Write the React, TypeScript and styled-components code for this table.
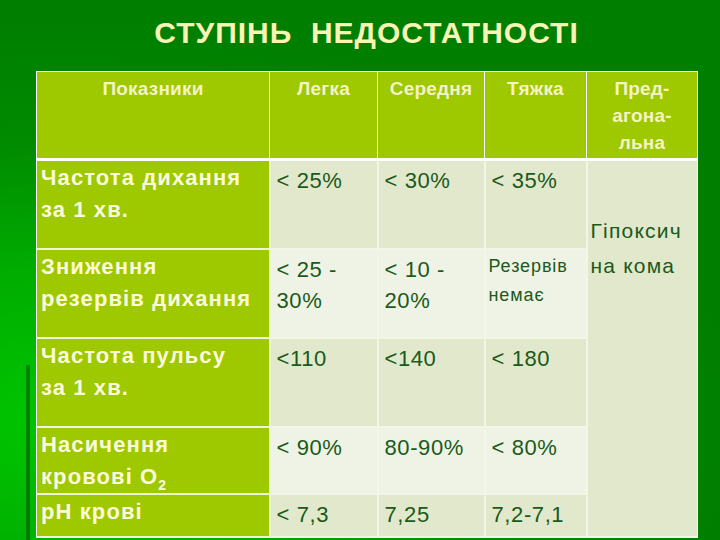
import styled, { createGlobalStyle } from 'styled-components'

const GlobalStyle = createGlobalStyle`
  html, body {
    margin: 0;
    padding: 0;
  }
  body {
    width: 720px;
    height: 540px;
    overflow: hidden;
    font-family: "Liberation Sans", Arial, sans-serif;
    background:
      linear-gradient(#008400, #007a00) 26px 365px / 4px 175px no-repeat,
      radial-gradient(ellipse 95% 75% at 8% 78%, #00c600 0%, #00ac00 38%, #008c00 68%, #007e00 100%);
  }
`

const Slide = styled.div`
  width: 720px;
  height: 540px;
  display: flex;
  flex-direction: column;
  padding-left: 36px;
  box-sizing: border-box;
`

const Title = styled.h1`
  margin: 0;
  height: 71px;
  width: 661px;
  display: flex;
  align-items: center;
  justify-content: center;
  padding-bottom: 6px;
  box-sizing: border-box;
  font-size: 30px;
  font-weight: 700;
  color: #f9f5b4;
  white-space: pre;
  letter-spacing: 1px;
`

const Table = styled.table`
  width: 661px;
  table-layout: fixed;
  border-collapse: collapse;
  border: 1px solid #ffffff;

  th, td {
    box-sizing: border-box;
  }
`

const Row = styled.tr<{ $h: number }>`
  height: ${p => p.$h}px;
`

const HeadCell = styled.th<{ $w: number }>`
  width: ${p => p.$w}px;
  background: #9ec800;
  color: #f5f3c6;
  font-size: 19px;
  font-weight: 700;
  line-height: 27px;
  letter-spacing: 0.2px;
  text-align: center;
  vertical-align: top;
  padding: 3px 2px 0;
  border: 1px solid #ffffff;
  border-bottom: 3px solid #ffffff;
`

const LabelCell = styled.td`
  background: #9ec800;
  color: #fbfbdc;
  font-size: 22px;
  font-weight: 700;
  line-height: 32px;
  letter-spacing: 1.1px;
  vertical-align: top;
  padding: 1px 4px 0;
  border: 2px solid #eef4dc;
  border-left: 1px solid #ffffff;
  white-space: nowrap;

  sub {
    font-size: 14px;
    line-height: 0;
    vertical-align: -6px;
  }
`

const ValueCell = styled.td<{ $even?: boolean; $small?: boolean }>`
  background: ${p => (p.$even ? '#eef3e5' : '#e1e8cc')};
  color: #1a5a1a;
  font-size: ${p => (p.$small ? '18px' : '22px')};
  line-height: ${p => (p.$small ? '29px' : '31px')};
  letter-spacing: ${p => (p.$small ? '0.9px' : '0.6px')};
  vertical-align: top;
  padding: ${p => (p.$small ? '2px 3px 0' : '4px 6px 0')};
  border: 2px solid #f2f6e6;
  white-space: nowrap;
`

const MergedCell = styled.td`
  background: #e1e8cc;
  color: #1a5a1a;
  font-size: 21px;
  line-height: 35px;
  letter-spacing: 1.2px;
  vertical-align: top;
  padding: 52px 3px 0;
  border: 2px solid #f2f6e6;
  border-right: 1px solid #ffffff;
  white-space: nowrap;
`

export default function App() {
  return (
    <>
      <GlobalStyle />
      <Slide>
        <Title>{'СТУПІНЬ  НЕДОСТАТНОСТІ'}</Title>
        <Table>
          <thead>
            <Row $h={88}>
              <HeadCell $w={233}>Показники</HeadCell>
              <HeadCell $w={108}>Легка</HeadCell>
              <HeadCell $w={107}>Середня</HeadCell>
              <HeadCell $w={102}>Тяжка</HeadCell>
              <HeadCell $w={111}>
                Пред-
                <br />
                агона-
                <br />
                льна
              </HeadCell>
            </Row>
          </thead>
          <tbody>
            <Row $h={89}>
              <LabelCell>
                Частота дихання
                <br />
                за 1 хв.
              </LabelCell>
              <ValueCell>&lt; 25%</ValueCell>
              <ValueCell>&lt; 30%</ValueCell>
              <ValueCell>&lt; 35%</ValueCell>
              <MergedCell rowSpan={5}>
                Гіпоксич
                <br />
                на кома
              </MergedCell>
            </Row>
            <Row $h={89}>
              <LabelCell>
                Зниження
                <br />
                резервів дихання
              </LabelCell>
              <ValueCell $even>
                &lt; 25 -
                <br />
                30%
              </ValueCell>
              <ValueCell $even>
                &lt; 10 -
                <br />
                20%
              </ValueCell>
              <ValueCell $even $small>
                Резервів
                <br />
                немає
              </ValueCell>
            </Row>
            <Row $h={89}>
              <LabelCell>
                Частота пульсу
                <br />
                за 1 хв.
              </LabelCell>
              <ValueCell>&lt;110</ValueCell>
              <ValueCell>&lt;140</ValueCell>
              <ValueCell>&lt; 180</ValueCell>
            </Row>
            <Row $h={67}>
              <LabelCell>
                Насичення
                <br />
                кровові O<sub>2</sub>
              </LabelCell>
              <ValueCell $even>&lt; 90%</ValueCell>
              <ValueCell $even>80-90%</ValueCell>
              <ValueCell $even>&lt; 80%</ValueCell>
            </Row>
            <Row $h={43}>
              <LabelCell>pH крові</LabelCell>
              <ValueCell>&lt; 7,3</ValueCell>
              <ValueCell>7,25</ValueCell>
              <ValueCell>7,2-7,1</ValueCell>
            </Row>
          </tbody>
        </Table>
      </Slide>
    </>
  )
}
